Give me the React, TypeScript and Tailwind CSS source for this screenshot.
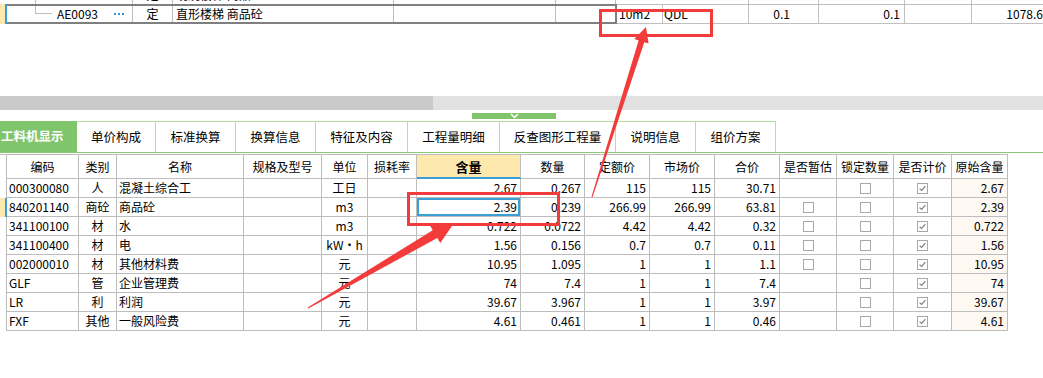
import React from 'react';

type Row = {
  code: string;
  type: string;
  name: string;
  unit: string;
  qty: string;
  num: string;
  quota: string;
  market: string;
  total: string;
  est: boolean | null;
  orig: string;
};

const rows: Row[] = [
  { code: '000300080', type: '人', name: '混凝土综合工', unit: '工日', qty: '2.67', num: '0.267', quota: '115', market: '115', total: '30.71', est: null, orig: '2.67' },
  { code: '840201140', type: '商砼', name: '商品砼', unit: 'm3', qty: '2.39', num: '0.239', quota: '266.99', market: '266.99', total: '63.81', est: false, orig: '2.39' },
  { code: '341100100', type: '材', name: '水', unit: 'm3', qty: '0.722', num: '0.0722', quota: '4.42', market: '4.42', total: '0.32', est: false, orig: '0.722' },
  { code: '341100400', type: '材', name: '电', unit: 'kW·h', qty: '1.56', num: '0.156', quota: '0.7', market: '0.7', total: '0.11', est: false, orig: '1.56' },
  { code: '002000010', type: '材', name: '其他材料费', unit: '元', qty: '10.95', num: '1.095', quota: '1', market: '1', total: '1.1', est: false, orig: '10.95' },
  { code: 'GLF', type: '管', name: '企业管理费', unit: '元', qty: '74', num: '7.4', quota: '1', market: '1', total: '7.4', est: null, orig: '74' },
  { code: 'LR', type: '利', name: '利润', unit: '元', qty: '39.67', num: '3.967', quota: '1', market: '1', total: '3.97', est: null, orig: '39.67' },
  { code: 'FXF', type: '其他', name: '一般风险费', unit: '元', qty: '4.61', num: '0.461', quota: '1', market: '1', total: '0.46', est: null, orig: '4.61' },
];

const tabs: { label: string; w: string }[] = [
  { label: '单价构成', w: 'w-[79px]' },
  { label: '标准换算', w: 'w-[80px]' },
  { label: '换算信息', w: 'w-[80px]' },
  { label: '特征及内容', w: 'w-[92px]' },
  { label: '工程量明细', w: 'w-[92px]' },
  { label: '反查图形工程量', w: 'w-[116px]' },
  { label: '说明信息', w: 'w-[80px]' },
  { label: '组价方案', w: 'w-[80px]' },
];

const headers = ['编码', '类别', '名称', '规格及型号', '单位', '损耗率', '含量', '数量', '定额价', '市场价', '合价', '是否暂估', '锁定数量', '是否计价', '原始含量'];

const GRID =
  'grid grid-cols-[72px_38px_127px_78px_46px_49px_104px_64px_65px_65px_65px_57px_57px_58px_56px]';
const CELL = 'border-r border-b border-[#bdbdbd] flex items-center min-w-0 overflow-hidden whitespace-nowrap';

function Box({ checked }: { checked: boolean }) {
  return (
    <div className="w-[11px] h-[11px] border border-[#a8a8a8] bg-white flex items-center justify-center">
      {checked && (
        <svg width="9" height="9" viewBox="0 0 9 9">
          <path d="M1.6 4.6 L3.6 6.4 L7.4 2.2" stroke="#7a7a8c" strokeWidth="1.1" fill="none" />
        </svg>
      )}
    </div>
  );
}

function arrowPoints(
  tx: number,
  ty: number,
  hx: number,
  hy: number,
  wTail: number,
  wShaft: number,
  headLen: number,
  headW: number
) {
  const dx = hx - tx;
  const dy = hy - ty;
  const L = Math.sqrt(dx * dx + dy * dy);
  const ux = dx / L;
  const uy = dy / L;
  const nx = -uy;
  const ny = ux;
  const bx = hx - ux * headLen;
  const by = hy - uy * headLen;
  const pts: [number, number][] = [
    [tx + (nx * wTail) / 2, ty + (ny * wTail) / 2],
    [bx + (nx * wShaft) / 2, by + (ny * wShaft) / 2],
    [bx + (nx * headW) / 2, by + (ny * headW) / 2],
    [hx, hy],
    [bx - (nx * headW) / 2, by - (ny * headW) / 2],
    [bx - (nx * wShaft) / 2, by - (ny * wShaft) / 2],
    [tx - (nx * wTail) / 2, ty - (ny * wTail) / 2],
  ];
  return pts.map((p) => `${p[0].toFixed(1)},${p[1].toFixed(1)}`).join(' ');
}

export default function App() {
  return (
    <div className="relative w-[1043px] h-[378px] overflow-hidden bg-white text-black text-[12px] leading-none font-['Noto_Sans_CJK_SC',sans-serif]">
      {/* partial upper row */}
      <div className="h-[4px] overflow-hidden">
        <div className="flex h-[19px] -mt-[15px]">
          <div className="w-[7px] shrink-0" />
          <div className="w-[126px] shrink-0 border-r border-[#c0c0c0] flex">
            <div className="ml-[28px] w-px h-full bg-[#c0c0c0]" />
          </div>
          <div className="w-[40px] shrink-0 border-r border-[#c0c0c0] flex items-center justify-center">定</div>
          <div className="w-[221px] shrink-0 border-r border-[#c0c0c0] flex items-center pl-[3px]">现浇楼梯 商品砼</div>
          <div className="w-[162px] shrink-0 border-r border-[#c0c0c0]" />
          <div className="w-[60px] shrink-0 border-r border-[#c0c0c0]" />
          <div className="w-[133px] shrink-0 border-r border-[#c0c0c0] flex items-center pl-[48px]">l</div>
          <div className="w-[70px] shrink-0 border-r border-[#c0c0c0]" />
          <div className="w-[86px] shrink-0 border-r border-[#c0c0c0]" />
          <div className="w-[67px] shrink-0 border-r border-[#c0c0c0]" />
        </div>
      </div>

      {/* current row */}
      <div className="flex h-[20px]">
        <div className="w-[5px] shrink-0 bg-[#fde9b0]" />
        <div className="w-[2px] shrink-0 bg-[#3a9fd5]" />
        <div className="flex w-[610px] shrink-0 border-y-2 border-r-2 border-[#7f7f7f]">
          <div className="w-[126px] shrink-0 border-r border-[#c0c0c0] flex items-center">
            <div className="ml-[28px] shrink-0 self-start w-[17px] h-[8px] border-l border-b border-[#c0c0c0]" />
            <span className="ml-[5px] shrink-0">AE0093</span>
            <div className="ml-auto mr-[8px] flex gap-[2px] shrink-0">
              <div className="w-[2px] h-[2px] bg-[#3a8fd0]" />
              <div className="w-[2px] h-[2px] bg-[#3a8fd0]" />
              <div className="w-[2px] h-[2px] bg-[#3a8fd0]" />
            </div>
          </div>
          <div className="w-[40px] shrink-0 border-r border-[#c0c0c0] flex items-center justify-center">定</div>
          <div className="w-[221px] shrink-0 border-r border-[#c0c0c0] flex items-center pl-[3px]">直形楼梯 商品砼</div>
          <div className="w-[162px] shrink-0 border-r border-[#c0c0c0]" />
          <div className="flex-1" />
        </div>
        <div className="flex flex-1 border-y border-[#c0c0c0]">
          <div className="w-[46px] shrink-0 border-r border-[#c0c0c0] flex items-center pl-[2px]">10m2</div>
          <div className="w-[86px] shrink-0 border-r border-[#c0c0c0] flex items-center pl-[1px]">QDL</div>
          <div className="w-[70px] shrink-0 border-r border-[#c0c0c0] flex items-center justify-end pr-[28px]">0.1</div>
          <div className="w-[86px] shrink-0 border-r border-[#c0c0c0] flex items-center justify-end pr-[4px]">0.1</div>
          <div className="w-[67px] shrink-0 border-r border-[#c0c0c0]" />
          <div className="flex-1 flex items-center justify-end">1078.6</div>
        </div>
      </div>

      {/* splitter scrollbar */}
      <div className="mt-[72px] flex h-[14px]">
        <div className="w-[433px] bg-[#c9c9c9]" />
        <div className="flex-1 bg-[#e1e1e1]" />
      </div>

      {/* green handle */}
      <div className="mt-[3px] ml-[472px] w-[84px] h-[6px] bg-[#82c46c] flex items-center justify-center">
        <svg width="9" height="6" viewBox="0 0 9 6">
          <path d="M1 1 L4.5 4.5 L8 1" stroke="#ffffff" strokeWidth="1.5" fill="none" />
        </svg>
      </div>

      {/* tabs */}
      <div className="mt-[2px] flex h-[31px]">
        <div className="w-[77px] bg-[#80c46b] text-white font-bold text-[12.5px] flex items-center pl-[1px] overflow-hidden whitespace-nowrap">
          工料机显示
        </div>
        {tabs.map((t) => (
          <div
            key={t.label}
            className={`${t.w} border-t border-r border-[#b4e29e] flex items-center justify-center text-[12.5px] whitespace-nowrap`}
          >
            {t.label}
          </div>
        ))}
      </div>
      <div className="h-px bg-[#8acb72]" />
      <div className="h-px" />

      {/* table */}
      <div className="w-[1008px] border-t border-[#bdbdbd]">
        <div className="flex h-[24px]">
          <div className="w-[6px]" />
          <div className="w-px bg-[#bdbdbd]" />
          <div className={GRID}>
            {headers.map((h) =>
              h === '含量' ? (
                <div
                  key={h}
                  className="border-r border-b-2 border-r-[#bdbdbd] border-b-[#3a9fd5] bg-[#fde9ae] flex items-center justify-center font-bold text-[13px]"
                >
                  {h}
                </div>
              ) : (
                <div key={h} className={`${CELL} justify-center`}>
                  {h}
                </div>
              )
            )}
          </div>
        </div>
        {rows.map((r, i) => (
          <div key={r.code} className="flex h-[19px]">
            {i === 1 ? (
              <>
                <div className="w-[5px] bg-[#fde9b0]" />
                <div className="w-[2px] bg-[#3a9fd5]" />
              </>
            ) : (
              <>
                <div className="w-[6px]" />
                <div className="w-px bg-[#bdbdbd]" />
              </>
            )}
            <div className={GRID}>
              <div className={`${CELL} pl-[2px]`}>{r.code}</div>
              <div className={`${CELL} justify-center`}>{r.type}</div>
              <div className={`${CELL} pl-[2px]`}>{r.name}</div>
              <div className={CELL} />
              <div className={`${CELL} justify-center`}>{r.unit}</div>
              <div className={CELL} />
              <div
                className={`${CELL} justify-end pr-[3px] ${i === 1 ? 'shadow-[inset_0_0_0_2px_#3a9fd5]' : ''}`}
              >
                {r.qty}
              </div>
              <div className={`${CELL} justify-end pr-[3px]`}>{r.num}</div>
              <div className={`${CELL} justify-end pr-[3px]`}>{r.quota}</div>
              <div className={`${CELL} justify-end pr-[3px]`}>{r.market}</div>
              <div className={`${CELL} justify-end pr-[3px]`}>{r.total}</div>
              <div className={`${CELL} justify-center`}>{r.est !== null && <Box checked={false} />}</div>
              <div className={`${CELL} justify-center`}>
                <Box checked={false} />
              </div>
              <div className={`${CELL} justify-center`}>
                <Box checked={true} />
              </div>
              <div className={`${CELL} justify-end pr-[3px] bg-[#fdf8f1]`}>{r.orig}</div>
            </div>
          </div>
        ))}
      </div>

      {/* annotations */}
      <svg className="absolute inset-0 pointer-events-none" width="1043" height="378" viewBox="0 0 1043 378">
        <rect x="600.5" y="10.5" width="111" height="25" fill="none" stroke="#f23c3c" strokeWidth="3" />
        <rect x="408.5" y="193.5" width="150" height="31" fill="none" stroke="#f23c3c" strokeWidth="3" />
        <polygon points={arrowPoints(592, 197, 646, 27, 1, 6, 15, 15)} fill="#f23c3c" />
        <polygon points={arrowPoints(308, 308, 454, 223, 1, 9, 22, 21)} fill="#f23c3c" />
      </svg>
    </div>
  );
}
